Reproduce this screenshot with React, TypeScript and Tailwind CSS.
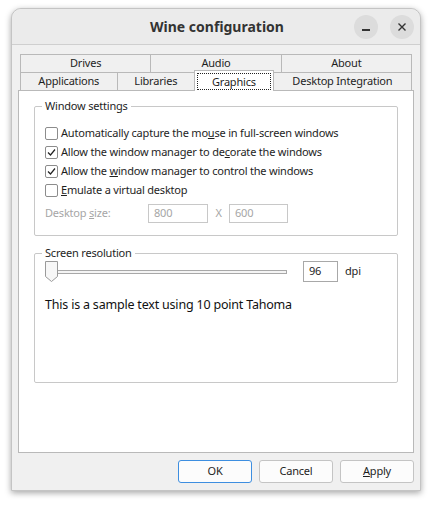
import React from "react";

const font = { fontFamily: '"Noto Sans", "DejaVu Sans", sans-serif' };

function Check({ checked }: { checked?: boolean }) {
  return (
    <span className="w-[13px] h-[13px] border border-[#8c8c8c] rounded-[2px] bg-white flex items-center justify-center shrink-0">
      {checked && (
        <svg width="9" height="9" viewBox="0 0 9 9">
          <path d="M1 4.5 L3.5 7 L8 1.5" fill="none" stroke="#222" strokeWidth="1.2" />
        </svg>
      )}
    </span>
  );
}

function CheckRow({ checked, children }: { checked?: boolean; children: React.ReactNode }) {
  return (
    <div className="h-[19px] flex items-center gap-[3px]">
      <Check checked={checked} />
      <span>{children}</span>
    </div>
  );
}

function Tab({ label, w, last }: { label: string; w: string; last?: boolean }) {
  return (
    <div className={`${w} h-[18px] border-t border-l ${last ? "border-r" : ""} border-[#b9b9b9] bg-[#f0f0f0] flex items-center justify-center`}>
      {label}
    </div>
  );
}

export default function App() {
  return (
    <div className="w-[432px] h-[505px] bg-white pt-[8px] pl-[11px] text-[11px] tracking-[-0.2px] text-[#1e1e1e]" style={font}>
      <div className="w-[410px] h-[483px] rounded-t-[10px] bg-[#f0f0f0] border border-[#c4c4c4] shadow-[0_2px_6px_rgba(0,0,0,0.35)] flex flex-col">
        {/* title bar */}
        <div className="h-[36px] rounded-t-[10px] bg-[#ebebeb] border-b border-[#cfcfcf] flex items-center relative">
          <div className="flex-1 text-center text-[14px] tracking-normal font-bold text-[#333] pl-[2px]">Wine configuration</div>
          <div className="absolute right-[6px] top-[6px] flex gap-[12px]">
            <div className="w-[24px] h-[24px] rounded-full bg-[#dcdcdc] flex items-center justify-center">
              <div className="w-[8px] h-[1.5px] bg-[#333] mt-[6px]" />
            </div>
            <div className="w-[24px] h-[24px] rounded-full bg-[#dcdcdc] flex items-center justify-center">
              <svg width="10" height="10" viewBox="0 0 10 10">
                <path d="M1.5 1.5 L8.5 8.5 M8.5 1.5 L1.5 8.5" stroke="#333" strokeWidth="1.4" />
              </svg>
            </div>
          </div>
        </div>

        {/* tabs */}
        <div className="pt-[9px] px-[6px]">
          <div className="mx-[2px] flex">
            <Tab label="Drives" w="w-[131px]" />
            <Tab label="Audio" w="w-[131px]" />
            <Tab label="About" w="w-[132px]" last />
          </div>
          <div className="mx-[2px] flex items-end relative z-10">
            <Tab label="Applications" w="w-[97px]" />
            <Tab label="Libraries" w="w-[78px]" />
            <div className="w-[80px] h-[21px] -mt-[3px] mb-[-1px] border-t border-l border-r border-[#b9b9b9] bg-white flex items-start justify-center pt-[2px] px-[2px] pb-[1px]">
              <div className="w-full h-full border border-dotted border-[#222] flex items-center justify-center leading-none">Graphics</div>
            </div>
            <div className="w-[139px] h-[18px] border-t border-r border-[#b9b9b9] bg-[#f0f0f0] flex items-center justify-center">Desktop Integration</div>
          </div>

          {/* panel */}
          <div className="h-[363px] border border-[#b9b9b9] bg-white px-[15px] pt-[8px]">
            <fieldset className="border border-[#c8c8c8] rounded-[2px] h-[137px] px-[10px]">
              <legend className="px-[3px] ml-[-3px] leading-[14px]">Window settings</legend>
              <div className="pt-[11px]">
                <CheckRow>Automatically capture the mo<u>u</u>se in full-screen windows</CheckRow>
                <CheckRow checked>Allow the window manager to de<u>c</u>orate the windows</CheckRow>
                <CheckRow checked>Allow the <u>w</u>indow manager to control the windows</CheckRow>
                <CheckRow><u>E</u>mulate a virtual desktop</CheckRow>
                <div className="h-[19px] mt-[4px] flex items-center text-[#a6a6a6]">
                  <span className="w-[103px]">Desktop <u>s</u>ize:</span>
                  <div className="w-[60px] h-[19px] border border-[#c8c8c8] flex items-center px-[5px]">800</div>
                  <span className="w-[21px] text-center">X</span>
                  <div className="w-[59px] h-[19px] border border-[#c8c8c8] flex items-center px-[5px]">600</div>
                </div>
              </div>
            </fieldset>

            <fieldset className="border border-[#c8c8c8] rounded-[2px] h-[137px] mt-[10px] px-[10px]">
              <legend className="px-[3px] ml-[-3px] leading-[14px]">Screen resolution</legend>
              <div className="flex items-center h-[21px] mt-[1px]">
                <div className="relative w-[243px] h-[21px] flex items-center">
                  <div className="ml-[10px] w-[232px] h-[4px] border border-[#a8a8a8] bg-[#f4f4f4]" />
                  <svg className="absolute left-0 top-0" width="14" height="21" viewBox="0 0 14 21">
                    <path d="M0.5 0.5 H12.5 V15.5 L6.5 20.5 L0.5 15.5 Z" fill="#f7f7f7" stroke="#9a9a9a" />
                  </svg>
                </div>
                <div className="ml-[15px] w-[35px] h-[21px] border border-[#a8a8a8] flex items-center px-[5px]">96</div>
                <span className="ml-[7px]">dpi</span>
              </div>
              <div className="mt-[14px] text-[12.5px] text-[#111]">This is a sample text using 10 point Tahoma</div>
            </fieldset>
          </div>
        </div>

        {/* buttons */}
        <div className="flex justify-end gap-[7px] pr-[6px] pt-[7px]">
          <button className="w-[74px] h-[23px] border border-[#3d8ee0] rounded-[3px] bg-[#fcfcfc]">OK</button>
          <button className="w-[74px] h-[23px] border border-[#c4c4c4] rounded-[3px] bg-[#fcfcfc]">Cancel</button>
          <button className="w-[74px] h-[23px] border border-[#c4c4c4] rounded-[3px] bg-[#fcfcfc]"><u>A</u>pply</button>
        </div>
      </div>
    </div>
  );
}
